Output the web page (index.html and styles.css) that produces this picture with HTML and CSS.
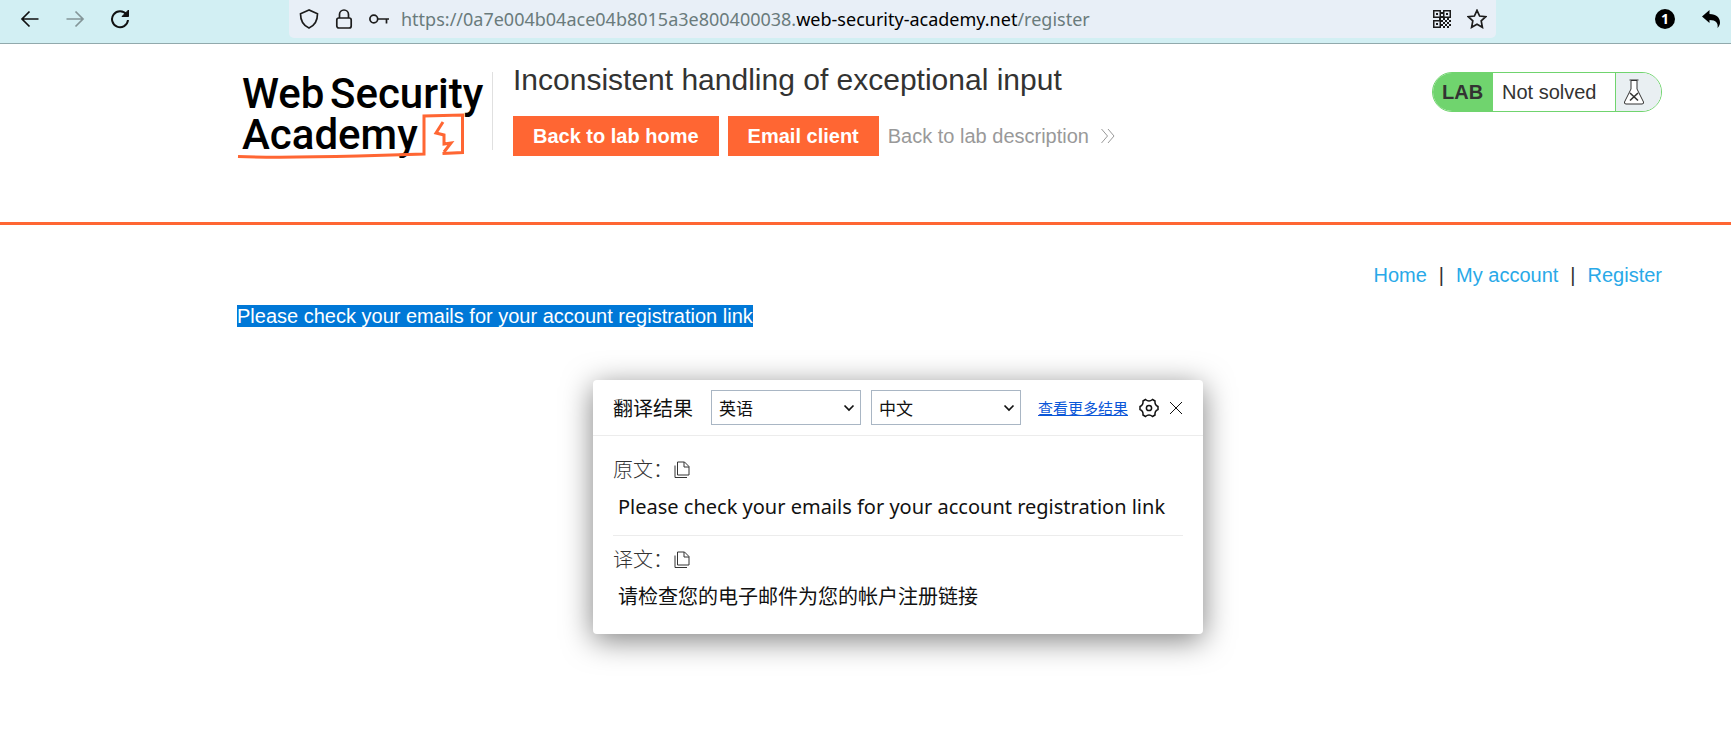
FILE: index.html
```html
<!DOCTYPE html>
<html lang="en">
<head>
<meta charset="utf-8">
<title>Inconsistent handling of exceptional input</title>
<link rel="stylesheet" href="styles.css">
</head>
<body>
<div class="toolbar">
  <div class="toolbar-nav">
    <button class="icon-btn" type="button" aria-label="Back"><svg width="20" height="20" viewBox="0 0 20 20"><path d="M18.500 10H2M9.500 2.500L2 10l7.500 7.500"/></svg></button>
    <button class="icon-btn faded" type="button" aria-label="Forward"><svg width="20" height="20" viewBox="0 0 20 20"><path d="M1.500 10H18M10.500 2.500L18 10l-7.500 7.500"/></svg></button>
    <button class="icon-btn" type="button" aria-label="Reload"><svg width="20" height="20" viewBox="0 0 20 20"><path d="M16.500 5.500A8 8 0 1 0 18 11" stroke-width="2"/><path d="M18.500 1v6.500H12z" fill="currentColor" stroke-width="1"/></svg></button>
  </div>
  <div class="address">
    <svg width="20" height="20" viewBox="0 0 20 20"><path d="M10 1L1.500 4.800C1.500 11 4 16.500 10 19c6-2.500 8.500-8 8.500-14.200z"/></svg>
    <svg width="20" height="20" viewBox="0 0 20 20"><rect x="2.800" y="9" width="14.400" height="10" rx="2"/><path d="M5.500 9V5.500a4.500 4.500 0 0 1 9 0V9"/></svg>
    <svg width="20" height="20" viewBox="0 0 20 20"><circle cx="4.800" cy="10" r="3.900"/><path d="M8.700 10H20M17.500 10v4.500"/></svg>
    <p class="url">https://0a7e004b04ace04b8015a3e800400038.<span class="domain">web-security-academy.net</span>/register</p>
    <svg width="20" height="20" viewBox="0 0 20 20"><path class="solid" fill-rule="evenodd" d="M1 1h8v8H1zM2.500 2.500v5h5v-5zM11 1h8v8h-8zM12.500 2.500v5h5v-5zM1 11h8v8H1zM2.500 12.500v5h5v-5z"/><path class="solid" d="M4 4h2v2H4zM14 4h2v2h-2zM4 14h2v2H4zM9 3h2v2H9zM9 7h2v2H9zM7 9h2v2H7zM11 9h2v2h-2zM15 9h2v2h-2zM9 11h2v2H9zM13 11h2v2h-2zM17 11h2v2h-2zM11 13h2v2h-2zM15 13h2v2h-2zM9 15h2v2H9zM13 15h2v2h-2zM17 15h2v2h-2zM11 17h2v2h-2zM15 17h2v2h-2z"/></svg>
    <svg width="20" height="20" viewBox="0 0 20 20"><path d="M10 1.300l2.600 5.700 6.200.7-4.600 4.200 1.200 6.400L10 15.200l-5.400 3.100 1.200-6.400L1.200 7.700 7.400 7z"/></svg>
  </div>
  <div class="toolbar-end">
    <span class="count">1</span>
    <button class="icon-btn" type="button" aria-label="Undo"><svg width="20" height="20" viewBox="0 0 20 20"><path class="solid" d="M1 7.500L8.500 1v4c7 0 10.500 4 10.500 8.500 0 2-.8 3.700-2.500 5.500 1-4.500-1.500-8-8-8V14z"/></svg></button>
  </div>
</div>

<header class="lab-header">
  <a class="logo" href="#" aria-label="Web Security Academy">
    <svg width="256" height="90" viewBox="0 0 256 90">
      <g class="logo-text"><text x="5" y="36">Web</text><text x="93" y="36">Security</text><text x="5" y="77">Academy</text></g>
      <g class="logo-mark"><path d="M1 84.500c40 1.500 80 .5 120-.5l66-2V44l38.500-1V80.500l-20 1"/><path d="M206 50l-7 11 8 2v9l7-1-7 9"/></g>
    </svg>
  </a>
  <div class="lab-info">
    <h1>Inconsistent handling of exceptional input</h1>
    <div class="actions">
      <a class="btn" href="#">Back to lab home</a>
      <a class="btn" href="#">Email client</a>
      <a class="back-link" href="#">Back to lab description <svg width="16" height="16" viewBox="0 0 16 16"><path d="M1.500 1l6 7-6 7M8 1l6 7-6 7"/></svg></a>
    </div>
  </div>
  <div class="status">
    <strong>LAB</strong><span>Not solved</span>
    <i><svg width="22" height="26" viewBox="0 0 22 26"><path fill="#fff" d="M8 1.500v8.500L1.500 23q-.5 2 1.500 2h16q2 0 1.500-2L14 10V1.500z"/><path d="M6.500 1h9"/><path stroke-width="1.600" d="M7 21.500l8-7.500M7 14l8 7.500"/></svg></i>
  </div>
</header>

<main class="page">
  <nav class="links"><a href="#">Home</a><span>|</span><a href="#">My account</a><span>|</span><a href="#">Register</a></nav>
  <p class="message"><span>Please check your emails for your account registration link</span></p>
</main>

<section class="popup" lang="zh-CN">
  <div class="popup-head">
    <h2>翻译结果</h2>
    <div class="picker"><select aria-label="源语言"><option>英语</option></select><svg width="12" height="8" viewBox="0 0 12 8"><path d="M1.500 1.500L6 6l4.500-4.500"/></svg></div>
    <div class="picker"><select aria-label="目标语言"><option>中文</option></select><svg width="12" height="8" viewBox="0 0 12 8"><path d="M1.500 1.500L6 6l4.500-4.500"/></svg></div>
    <a class="more" href="#">查看更多结果</a>
    <button class="icon-btn gear" type="button" aria-label="设置"><svg width="20" height="20" viewBox="0 0 20 20"><path d="M6.500 1.500Q10 4.500 13.500 1.500L16 3Q15.500 7 19 8.500v3Q15.500 13 16 17l-2.500 1.500Q10 15.500 6.500 18.500L4 17Q4.500 13 1 11.500v-3Q4.500 7 4 3z"/><circle cx="10" cy="10" r="2.600"/></svg></button>
    <button class="icon-btn close" type="button" aria-label="关闭"><svg width="14" height="14" viewBox="0 0 14 14"><path d="M1 1l12 12M13 1L1 13"/></svg></button>
  </div>
  <div class="popup-body">
    <div class="block">
      <h3>原文：<button class="icon-btn copy" type="button" aria-label="复制原文"><svg width="16" height="18" viewBox="0 0 16 18"><path d="M3.500 1h7L15 5.500V14H3.500zM10 1v5h5M1 4.500v12h12"/></svg></button></h3>
      <p lang="en">Please check your emails for your account registration link</p>
    </div>
    <div class="block">
      <h3>译文：<button class="icon-btn copy" type="button" aria-label="复制译文"><svg width="16" height="18" viewBox="0 0 16 18"><path d="M3.500 1h7L15 5.500V14H3.500zM10 1v5h5M1 4.500v12h12"/></svg></button></h3>
      <p>请检查您的电子邮件为您的帐户注册链接</p>
    </div>
  </div>
</section>
</body>
</html>
```
FILE: styles.css
```css
* { box-sizing: border-box; }
body {
  margin: 0;
  background: #fff;
  color: #333332;
  font: 20px/24px "Liberation Sans", Arial, sans-serif;
}
h1, h2, h3, p { margin: 0; font-weight: 400; }
a { text-decoration: none; }
svg { display: block; flex: none; fill: none; stroke: currentColor; stroke-width: 1.7; }
.solid { fill: currentColor; stroke: none; }
.icon-btn { display: block; padding: 0; border: 0; background: none; color: inherit; }

/* Browser toolbar */
.toolbar {
  display: flex;
  height: 44px;
  padding-bottom: 5px;
  background: #d2eff3;
  border-bottom: 1px solid #91a9ac;
  color: #111;
}
.toolbar-nav { display: flex; align-items: center; gap: 25px; width: 289px; padding-left: 20px; }
.faded { opacity: .4; }
.address {
  display: flex;
  flex: 1;
  align-items: center;
  gap: 15px;
  padding: 0 9px 0 10px;
  background: #e8eff7;
  border-radius: 0 0 5px 5px;
  color: #1c1c1c;
}
.url { flex: 1; margin-left: -3px; color: #6a7b7c; font: 18px/24px "Noto Sans", sans-serif; }
.domain { color: #000; }
.toolbar-end { display: flex; align-items: center; gap: 26px; width: 235px; padding-right: 10px; justify-content: flex-end; color: #000; }
.count {
  width: 20px;
  border-radius: 50%;
  background: #000;
  color: #fff;
  font: bold 14px/20px "Noto Sans", sans-serif;
  text-align: center;
}

/* Lab header */
.lab-header {
  display: flex;
  align-items: flex-start;
  height: 181px;
  padding: 28px 69px 0 237px;
  border-bottom: 3px solid #ff6633;
}
.logo { width: 256px; height: 78px; border-right: 1px solid #e0e0e0; }
.logo svg { overflow: visible; }
.logo-text { fill: #000; stroke: none; font: 500 42px Roboto, sans-serif; }
.logo-mark { stroke: #ff6633; stroke-width: 3; }
.lab-info { flex: 1; padding-left: 20px; }
h1 { font-size: 30px; line-height: 16px; }
.actions { display: flex; align-items: center; margin-top: 28px; }
.btn { margin-right: 9px; padding: 8px 20px; background: #ff6633; color: #fff; font-weight: 700; }
.back-link { display: flex; align-items: center; gap: 11px; color: #999; }
.back-link svg { stroke-width: 1; }
.status {
  display: flex;
  width: 230px;
  height: 40px;
  overflow: hidden;
  border: 1px solid #70d46e;
  border-radius: 20px;
  line-height: 38px;
}
.status strong { width: 60px; padding-left: 9px; background: #70d46e; }
.status span { flex: 1; padding-left: 9px; }
.status i { display: flex; align-items: center; width: 46px; padding-left: 7px; background: #e9eff2; border-left: 1px solid #70d46e; }
.status svg { stroke-width: 1; }

/* Page */
.page { padding: 38px 69px 0 237px; }
.links { display: flex; justify-content: flex-end; gap: 12px; }
.links a { color: #29a9e8; }
.message { margin-top: 17px; color: #fff; }
.message span { background: #0078d7; }

/* Translation popup */
.popup {
  position: absolute;
  top: 380px;
  left: 593px;
  width: 610px;
  border-radius: 4px;
  background: #fff;
  box-shadow: 0 6px 30px rgba(0, 0, 0, .5);
  color: #111;
  font-family: "Noto Sans", "Noto Sans CJK SC", sans-serif;
}
.popup-head { display: flex; align-items: center; height: 56px; padding: 0 20px; border-bottom: 1px solid #ececec; }
.popup h2, .popup h3 { font-size: 20px; line-height: 28px; }
.popup h2 { margin-right: 18px; padding-top: 2px; }
.picker { display: grid; align-items: center; width: 150px; margin-right: 10px; }
.picker select, .picker svg { grid-area: 1 / 1; }
.picker select {
  height: 35px;
  padding: 0 7px;
  appearance: none;
  border: 1px solid #a9b6c4;
  border-radius: 0;
  background: #fff;
  color: #111;
  font: 17px "Noto Sans CJK SC", sans-serif;
}
.picker svg { justify-self: end; margin-right: 6px; pointer-events: none; }
.more { margin: 0 11px 0 7px; color: #0b57d8; font: 15px/20px "Noto Sans CJK SC", sans-serif; text-decoration: underline; }
.gear svg { stroke-width: 1.5; }
.close { margin-left: auto; }
.close svg, .copy svg { stroke-width: 1; }
.popup-body { padding: 20px 20px 23px; }
.block + .block { margin-top: 14px; padding-top: 10px; border-top: 1px solid #ececec; }
.popup h3 { display: flex; align-items: center; gap: 1px; color: #333; font-weight: 300; }
.block p { margin-top: 9px; padding-left: 5px; line-height: 28px; }
```
